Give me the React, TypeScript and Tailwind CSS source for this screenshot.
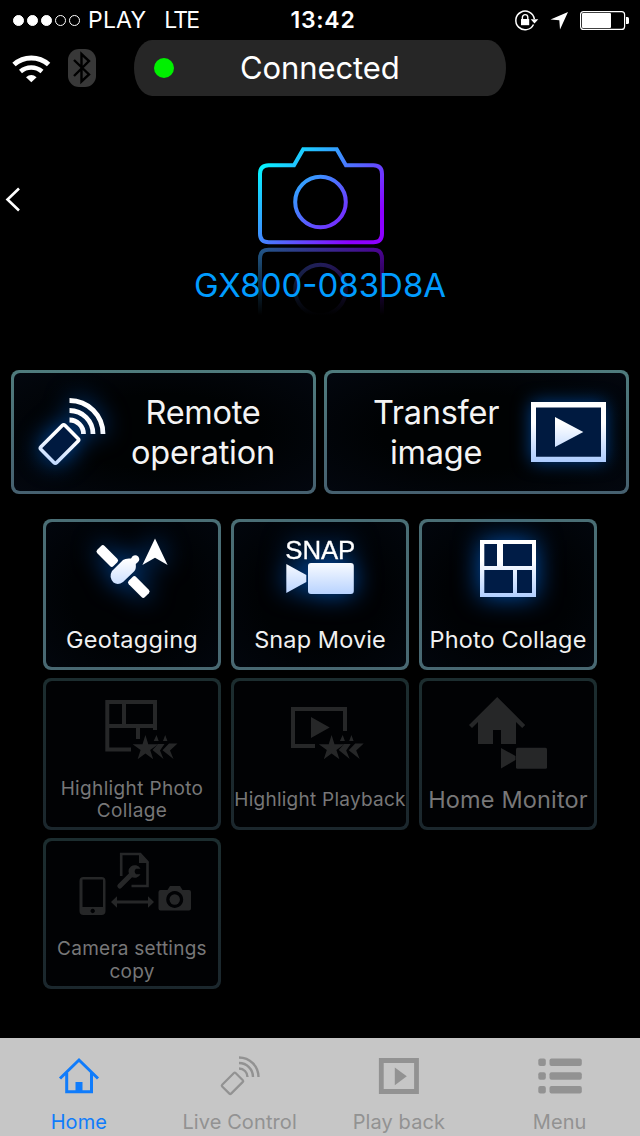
import type { ReactNode } from "react";
import clsx from "clsx";

type Tile = {
  label: ReactNode;
  labelClass: string;
  viewBox: string;
  icon: ReactNode;
  disabled?: boolean;
};

type Tab = {
  label: string;
  labelClass: string;
  viewBox: string;
  icon: ReactNode;
  active?: boolean;
};

function Gradients() {
  return (
    <svg width="0" height="0" className="absolute" aria-hidden>
      <defs>
        <linearGradient id="ice-remote" gradientUnits="userSpaceOnUse" x1="0" y1="398" x2="0" y2="465">
          <stop offset="0.4" stopColor="#fff" />
          <stop offset="1" stopColor="#b4d0ff" />
        </linearGradient>
        <linearGradient id="ice-phone" gradientUnits="userSpaceOnUse" x1="-10" y1="-16" x2="10" y2="16">
          <stop offset="0.3" stopColor="#fff" />
          <stop offset="1" stopColor="#c4dbff" />
        </linearGradient>
        <linearGradient id="ice-transfer" gradientUnits="userSpaceOnUse" x1="0" y1="402" x2="0" y2="462">
          <stop offset="0.35" stopColor="#fff" />
          <stop offset="1" stopColor="#acccff" />
        </linearGradient>
        <linearGradient id="ice-tile" gradientUnits="userSpaceOnUse" x1="0" y1="539" x2="0" y2="598">
          <stop offset="0.35" stopColor="#fff" />
          <stop offset="1" stopColor="#b0ceff" />
        </linearGradient>
        <linearGradient id="camera-stroke" gradientUnits="userSpaceOnUse" x1="270" y1="150" x2="366" y2="246">
          <stop offset="0" stopColor="#00ffff" />
          <stop offset="0.9" stopColor="#8c00ff" />
        </linearGradient>
        <linearGradient id="mirror-stroke" gradientUnits="userSpaceOnUse" x1="240" y1="270" x2="384" y2="246">
          <stop offset="0" stopColor="#1b6c8e" />
          <stop offset="1" stopColor="#50009a" />
        </linearGradient>
        <linearGradient id="mirror-fade" gradientUnits="userSpaceOnUse" x1="0" y1="246" x2="0" y2="315">
          <stop offset="0" stopColor="#000" stopOpacity="0" />
          <stop offset="1" stopColor="#000" />
        </linearGradient>
      </defs>
    </svg>
  );
}

function StatusBar() {
  return (
    <div className="flex h-10 items-center justify-between pr-[11px] pl-[13px] text-white">
      <div className="flex w-[200px] items-center text-[23px] leading-none">
        <div className="flex gap-[3px]">
          {[0, 1, 2, 3, 4].map((i) => (
            <span
              key={i}
              className={clsx("h-[11px] w-[11px] rounded-full border border-white", i < 3 && "bg-white")}
            />
          ))}
        </div>
        <span className="mt-px ml-[8px] tracking-[0.2px]">PLAY</span>
        <span className="mt-px ml-[18px] tracking-[-1.8px]">LTE</span>
      </div>
      <span className="mt-px ml-[4px] text-[23px] leading-none font-semibold tracking-[0.7px]">13:42</span>
      <div className="flex w-[200px] justify-end">
        <svg width="116" height="24" viewBox="513 8 116 24" fill="none">
          <path d="M533.5 24.5A9.3 9.3 0 1 1 534.3 19" stroke="#fff" strokeWidth="1.5" />
          <path d="M530.7 19.2h7.6l-3.8 4.2z" fill="#fff" />
          <rect x="521" y="19" width="8.2" height="6.2" fill="#fff" />
          <path d="M522.4 19.5v-2.2a2.7 2.7 0 0 1 5.4 0v2.2" stroke="#fff" strokeWidth="1.4" />
          <path d="M568 12l-8 17.5-.7-9.2-8.8-.8z" fill="#fff" />
          <rect x="580.6" y="11.6" width="44" height="17.8" rx="3" stroke="#fff" strokeWidth="1.2" />
          <rect x="582" y="13" width="29" height="15" rx="1" fill="#fff" />
          <path d="M626 17h1.5q1.5 0 1.5 1.5v4q0 1.5-1.5 1.5h-1.5z" fill="#fff" />
        </svg>
      </div>
    </div>
  );
}

function ConnectionRow() {
  return (
    <div className="flex h-14 items-center">
      <svg width="90" height="40" viewBox="10 48 90 40" fill="none" className="ml-[10px]">
        <path d="M14 64.5a26 26 0 0 1 34.6 0" stroke="#fff" strokeWidth="5" />
        <path d="M20.5 71.5a16.500 16.500 0 0 1 21.500 0" stroke="#fff" strokeWidth="4.6" />
        <path d="M26 77.200q5.300-4.400 10.600 0l-5.300 5z" fill="#fff" />
        <rect x="68" y="49" width="28" height="38" rx="11" fill="#383838" />
        <path d="M74 60l15 14.500-7.500 7V54l7.500 7L74 76" stroke="#000" strokeWidth="2.4" />
      </svg>
      <div className="ml-[34px] flex h-14 w-[372px] items-center rounded-[18px/28px] bg-[#262626] pl-5">
        <span className="h-5 w-5 rounded-full bg-[#00f000]" />
        <span className="ml-[66px] text-[31px] tracking-[-0.1px] text-white">Connected</span>
      </div>
    </div>
  );
}

function Hero() {
  return (
    <section className="flex h-[274px] flex-col items-center">
      <div className="flex w-full">
        <svg width="30" height="30" viewBox="0 185 30 30" fill="none" className="mt-[89px]">
          <path d="M19 188.500L7.500 199.500L19 210.500" stroke="#fff" strokeWidth="2.6" />
        </svg>
        <svg width="140" height="180" viewBox="250 140 140 180" fill="none" className="mt-[44px] ml-[220px]">
          <g stroke="url(#camera-stroke)" strokeWidth="4">
            <path d="M260 174q0-8.700 8.700-8.700h25.300l9.200-16h33.500l9.200 16h27.400q8.700 0 8.700 8.700v59.500q0 8.700-8.700 8.700h-104.600q-8.700 0-8.700-8.700z" />
            <circle cx="320.5" cy="202" r="25.3" />
          </g>
          <g stroke="url(#mirror-stroke)" strokeWidth="4">
            <path d="M260 318v-59.500q0-8.700 8.700-8.700h104.600q8.700 0 8.700 8.700v59.500" />
            <circle cx="320.5" cy="290" r="25.3" strokeOpacity="0.8" />
          </g>
          <rect x="250" y="247" width="140" height="73" fill="url(#mirror-fade)" />
        </svg>
      </div>
      <h1 className="-mt-[55px] text-[33px] leading-[40px] text-[#009cff]">GX800-083D8A</h1>
    </section>
  );
}

function Frame({ className, disabled, children }: { className: string; disabled?: boolean; children: ReactNode }) {
  return (
    <button
      type="button"
      disabled={disabled}
      className={clsx("block rounded-[8px] bg-linear-to-b p-[3px]", className)}
    >
      {children}
    </button>
  );
}

function MainActions() {
  const inner =
    "flex h-full w-full items-center rounded-[6px] bg-[radial-gradient(ellipse_at_center,#000203_45%,#03070f_100%)] text-[32.5px] leading-[40px] tracking-[-0.25px] text-[#f4f4f4]";
  return (
    <div className="flex gap-2 px-[11px]">
      <Frame className="h-[124px] w-[305px] from-[#4f7b7d] to-[#46606f]">
        <span className={inner}>
          <svg
            width="88"
            height="100"
            viewBox="28 382 88 100"
            fill="none"
            className="ml-[14px] overflow-visible drop-shadow-[0_0_12px_#0050b0]"
          >
            <path
              d="M69.500 400.500a33.500 33.500 0 0 1 33.500 33.500M69.500 410.500a23.500 23.500 0 0 1 23.500 23.500M69.500 420a14 14 0 0 1 14 14"
              stroke="url(#ice-remote)"
              strokeWidth="4.8"
            />
            <rect
              x="-11.1"
              y="-17"
              width="22.2"
              height="34"
              rx="2"
              transform="translate(59.5 444) rotate(45)"
              fill="#001a40"
              stroke="url(#ice-phone)"
              strokeWidth="3.6"
            />
          </svg>
          <span className="mt-[2px] ml-[7px] w-[160px] text-center">
            Remote
            <br />
            operation
          </span>
        </span>
      </Frame>
      <Frame className="h-[124px] w-[305px] from-[#4f7b7d] to-[#46606f]">
        <span className={inner}>
          <span className="mt-[2px] ml-[29px] w-[160px] text-center">
            Transfer
            <br />
            image
          </span>
          <svg
            width="86"
            height="80"
            viewBox="526 392 86 80"
            fill="none"
            className="ml-[10px] overflow-visible drop-shadow-[0_0_9px_#00408c]"
          >
            <path d="M533 404h71v56h-71z" fill="#001a40" />
            <path d="M531 402h75v60h-75zM536 407.500v49.300h65v-49.300z" fillRule="evenodd" fill="url(#ice-transfer)" />
            <path d="M555 417l28.300 15L555 447z" fill="url(#ice-transfer)" />
          </svg>
        </span>
      </Frame>
    </div>
  );
}

// star followed by two swoosh marks, shared by both highlight icons
function StarTrail() {
  return (
    <>
      <path d="M145.400 735l2.900 9.200h9.900l-8 5.900 3 9.200-7.800-5.700-7.800 5.700 3-9.200-8-5.900h9.900z" />
      <path d="M156.500 735l2.200 6h-5zM165.200 735l2.200 6h-4.400z" />
      <path d="M164.500 744h-6.500l-5.500 6 11 9-3.500-8.500zM177.500 743.500h-8.500l-6.500 6.800 11 8.700-3.500-8.500z" />
    </>
  );
}

const tiles: Tile[] = [
  {
    label: "Geotagging",
    labelClass: "text-[23.5px] tracking-[0.3px]",
    viewBox: "46 522 172 94",
    icon: (
      <>
        <rect x="-11.5" y="-5.2" width="23" height="10.4" rx="2.5" transform="translate(107.3 556) rotate(45)" />
        <rect x="-11.5" y="-5.2" width="23" height="10.4" rx="2.5" transform="translate(138.8 587) rotate(45)" />
        <path d="M112 571L123 560Q125.500 558 131 558.500L132.500 556.300Q135.500 554 138.200 556.500Q140.500 559.500 138 562L135.800 564Q136.300 569.500 134 571.500L123 582Q118 585.500 113.500 582.500Q108.500 577 112 571Z" />
        <path d="M155 538.500l12.600 26.500-12.600-7.300-12.600 7.300z" />
      </>
    ),
  },
  {
    label: "Snap Movie",
    labelClass: "text-[23.5px] tracking-[0.1px]",
    viewBox: "234 522 172 94",
    icon: (
      <>
        <text
          x="285.3"
          y="558.6"
          fontSize="25.8"
          fontFamily="Liberation Sans, Arial, sans-serif"
          stroke="#fff"
          strokeWidth="0.3"
          textLength="70"
        >
          SNAP
        </text>
        <path d="M286.300 564l20 11v7l-20 11z" />
        <rect x="308" y="563" width="45.8" height="31" rx="3" />
      </>
    ),
  },
  {
    label: "Photo Collage",
    labelClass: "text-[23.5px] tracking-[0.15px]",
    viewBox: "422 522 172 94",
    icon: (
      <>
        <path d="M482 542h52v52h-52z" fill="#001c46" />
        <path
          fillRule="evenodd"
          d="M480 540h56v57h-56zM484.300 544v22h12.700v-22zM503 544v22h29v-22zM484.300 570v23h28.700v-23zM517 570v23h15v-23z"
        />
      </>
    ),
  },
  {
    label: (
      <>
        Highlight Photo
        <br />
        Collage
      </>
    ),
    labelClass: "mt-px text-[19px] leading-[22px] tracking-[0.35px]",
    viewBox: "46 681 172 94",
    disabled: true,
    icon: (
      <>
        <path
          d="M131 749.500h-23.700v-47.500h47.700v28M107.300 726h47.700M124 702v24M138 726v13"
          fill="none"
          stroke="#262728"
          strokeWidth="4"
        />
        <StarTrail />
      </>
    ),
  },
  {
    label: "Highlight Playback",
    labelClass: "mt-px text-[19px] leading-[22px] tracking-[0.25px]",
    viewBox: "234 681 172 94",
    disabled: true,
    icon: (
      <>
        <path d="M315 746h-22v-37h52v22" fill="none" stroke="#262728" strokeWidth="4" />
        <path d="M311 717l18.700 10.500L311 738z" />
        <g transform="translate(186.2 0)">
          <StarTrail />
        </g>
      </>
    ),
  },
  {
    label: "Home Monitor",
    labelClass: "mt-px text-[23.5px] tracking-[0.15px]",
    viewBox: "422 681 172 94",
    disabled: true,
    icon: (
      <>
        <path d="M497.200 697l28 28-3 3-6.200-6v22h-15v-14h-8v14h-15v-22l-6 6-3-3z" />
        <path d="M501 748l14.500 8v4l-14.500 8.500z" />
        <rect x="516" y="747.8" width="31" height="21" rx="1.5" />
      </>
    ),
  },
  {
    label: (
      <>
        Camera settings
        <br />
        copy
      </>
    ),
    labelClass: "mt-px text-[19px] leading-[23px] tracking-[0.25px]",
    viewBox: "46 841 172 94",
    disabled: true,
    icon: (
      <>
        <path
          fillRule="evenodd"
          d="M83.500 877h18a4 4 0 0 1 4 4v30a4 4 0 0 1-4 4h-18a4 4 0 0 1-4-4v-30a4 4 0 0 1 4-4zM82.500 879.500v27.500h20.500v-27.500zM92.700 908.800a2.200 2.200 0 1 0 .01 0z"
        />
        <path d="M121.200 876v-22h19l7.300 8v24h-16" fill="none" stroke="#262728" strokeWidth="2.6" />
        <path d="M139 853l10 10h-10z" />
        <path d="M119.800 886l12-12" fill="none" stroke="#262728" strokeWidth="5" strokeLinecap="round" />
        <path d="M140.500 868.800a6.300 6.300 0 1 0 0 5.400h-4.500q-2.700-2.700 0-5.400z" />
        <path d="M111 902l6-5.700v4.200h31v-4.200l6 5.700-6 5.700v-4.200h-31v4.200z" />
        <path
          fillRule="evenodd"
          d="M160.500 890h7l2.500-4h10l2.500 4h6.500q2 0 2 2v16.500q0 2-2 2h-28.500q-2 0-2-2v-16.500q0-2 2-2zM174.700 891a8.500 8.500 0 1 0 .01 0z"
        />
        <circle cx="174.7" cy="899.5" r="5.2" />
      </>
    ),
  },
];

function FeatureTile({ tile }: { tile: Tile }) {
  return (
    <Frame
      className={clsx("h-full w-full", tile.disabled ? "from-[#1c2d2f] to-[#1b272d]" : "from-[#4a6e75] to-[#486872]")}
      disabled={tile.disabled}
    >
      <span
        className={clsx(
          "flex h-full w-full flex-col items-center rounded-[6px]",
          tile.disabled ? "bg-[#010204]" : "bg-[radial-gradient(ellipse_at_center,#000204_50%,#02060d_100%)]",
        )}
      >
        <svg
          width="172"
          height="94"
          viewBox={tile.viewBox}
          fill={tile.disabled ? "#262728" : "url(#ice-tile)"}
          className={clsx("shrink-0 overflow-visible", !tile.disabled && "drop-shadow-[0_0_13px_#0050b0]")}
        >
          {tile.icon}
        </svg>
        <span
          className={clsx(
            "flex h-12 items-center justify-center text-center whitespace-nowrap",
            tile.disabled ? "text-[#777778]" : "text-[#f0f0f0]",
            tile.labelClass,
          )}
        >
          <span>{tile.label}</span>
        </span>
      </span>
    </Frame>
  );
}

const tabs: Tab[] = [
  {
    label: "Home",
    labelClass: "-ml-[2px] tracking-[0.1px]",
    viewBox: "56 1054 48 44",
    active: true,
    icon: (
      <>
        <path d="M60 1078.500l19-18.500 19 18.500M66.700 1073v18.700h24.800v-18.700" />
        <path d="M75.500 1082h7v10h-7z" fill="currentColor" stroke="none" />
      </>
    ),
  },
  {
    label: "Live Control",
    labelClass: "tracking-[0.1px]",
    viewBox: "216 1054 48 44",
    icon: (
      <>
        <path
          d="M239 1057.500a19.500 19.500 0 0 1 19.500 19.500M239 1063a14 14 0 0 1 14 14M239 1068.500a8.500 8.500 0 0 1 8.500 8.500"
          strokeWidth="2.4"
        />
        <rect
          x="-6.3"
          y="-9.5"
          width="12.6"
          height="19"
          rx="1.2"
          transform="translate(232.5 1083.3) rotate(45)"
          strokeWidth="2.2"
        />
      </>
    ),
  },
  {
    label: "Play back",
    labelClass: "-ml-px tracking-[0.1px]",
    viewBox: "375 1054 48 44",
    icon: (
      <>
        <path d="M381.300 1060.500h35.200v31h-35.200z" strokeWidth="4.8" />
        <path d="M394.800 1067.500l12 8.800-12 9z" fill="currentColor" stroke="none" />
      </>
    ),
  },
  {
    label: "Menu",
    labelClass: "ml-[1px] tracking-[0.1px]",
    viewBox: "535 1054 48 44",
    icon: (
      <g fill="currentColor" stroke="none">
        {[1058.5, 1072.2, 1086].map((y) => (
          <g key={y}>
            <rect x="538.3" y={y} width="7.5" height="7.5" rx="2" />
            <rect x="549.5" y={y} width="32.3" height="7.5" rx="2" />
          </g>
        ))}
      </g>
    ),
  },
];

function TabBar() {
  return (
    <nav className="flex h-[98px] bg-[#c6c6c6] pr-px">
      {tabs.map((tab) => (
        <a
          key={tab.label}
          href="#"
          className={clsx(
            "flex flex-1 flex-col items-center pt-4",
            tab.active ? "text-[#107cfb]" : "text-[#929292]",
          )}
        >
          <svg width="48" height="44" viewBox={tab.viewBox} fill="none" stroke="currentColor" strokeWidth="3">
            {tab.icon}
          </svg>
          <span className={clsx("mt-[12px] text-[20px] leading-6", tab.labelClass)}>{tab.label}</span>
        </a>
      ))}
    </nav>
  );
}

export default function App() {
  return (
    <div className="flex h-[1136px] w-[640px] flex-col overflow-hidden bg-black font-[Inter,Roboto,sans-serif]">
      <Gradients />
      <StatusBar />
      <ConnectionRow />
      <Hero />
      <MainActions />
      <div className="mt-[25px] grid grid-cols-[178px_178px_178px] grid-rows-[151px_152px_151px] gap-x-[10px] gap-y-2 pl-[43px]">
        {tiles.map((tile, i) => (
          <FeatureTile key={i} tile={tile} />
        ))}
      </div>
      <div className="grow" />
      <TabBar />
    </div>
  );
}
